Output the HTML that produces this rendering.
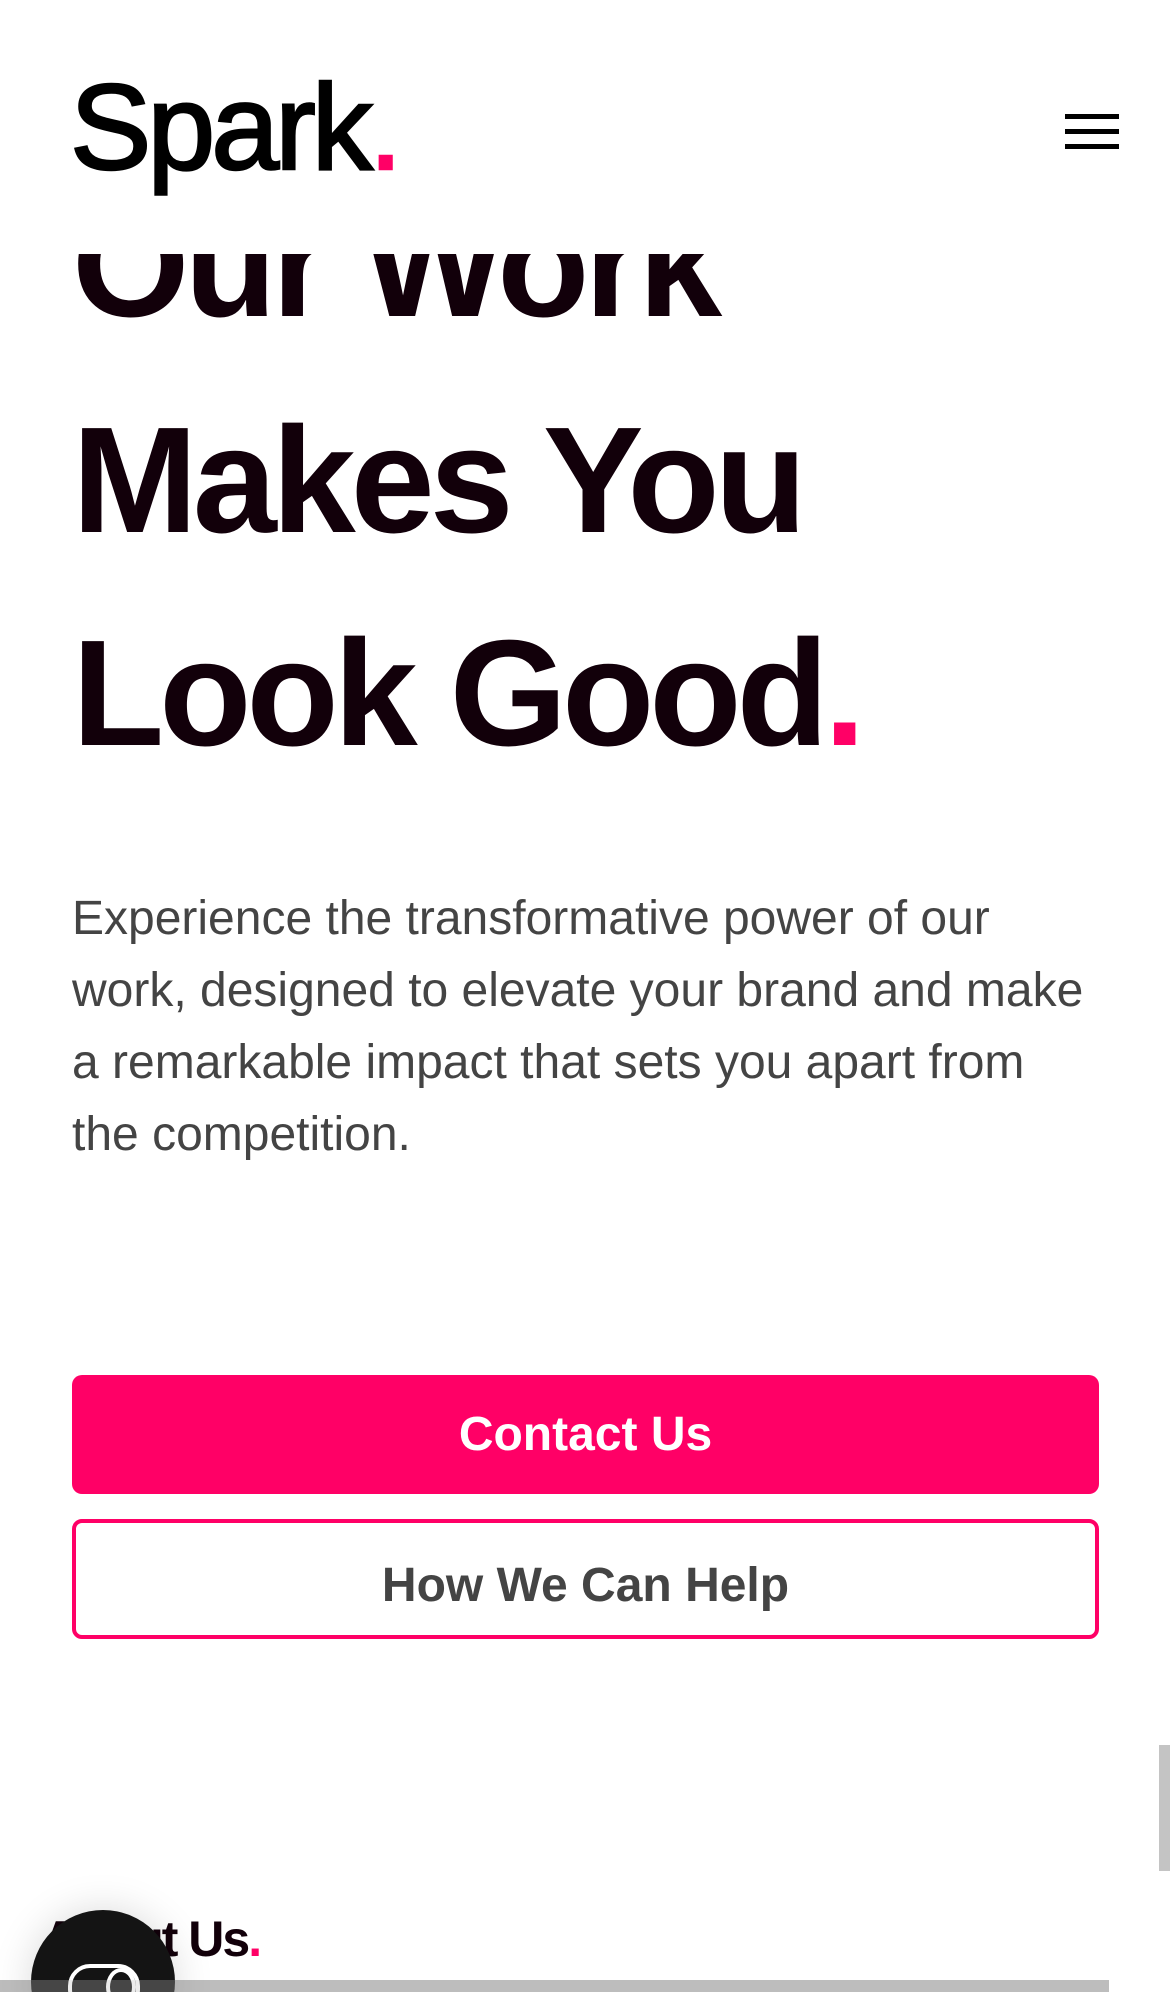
<!DOCTYPE html>
<html><head><meta charset="utf-8"><style>
html,body{margin:0;padding:0;background:#fff;width:1170px;height:1992px;overflow:hidden;position:relative;font-family:"Liberation Sans",Arial,sans-serif}
.abs{position:absolute}
.h{font-weight:700;font-size:151px;color:#12000a;letter-spacing:-5px;white-space:nowrap;line-height:1}
.pink{color:#ff0066}
</style></head><body>
<div class="abs h" style="left:72px;top:188px">Our Work</div>
<div class="abs" style="left:0;top:0;width:1170px;height:254px;background:#fff"></div>
<div class="abs" style="left:70px;top:66px;font-size:122px;font-weight:400;-webkit-text-stroke:2.5px #000;letter-spacing:-4px;color:#000;line-height:1;white-space:nowrap">Spark<span class="pink" style="-webkit-text-stroke:2.5px #ff0066">.</span></div>
<div class="abs" style="left:1065px;top:114px;width:54px;height:5px;background:#000"></div>
<div class="abs" style="left:1065px;top:129px;width:54px;height:5px;background:#000"></div>
<div class="abs" style="left:1065px;top:144px;width:54px;height:5px;background:#000"></div>
<div class="abs h" style="left:72px;top:404px">Makes You</div>
<div class="abs h" style="left:72px;top:617px">Look Good<span class="pink">.</span></div>
<div class="abs" style="left:72px;top:883px;width:1020px;font-size:48px;line-height:72px;color:#444">Experience the transformative power of our work, designed to elevate your brand and make a remarkable impact that sets you apart from the competition.</div>
<div class="abs" style="left:72px;top:1375px;width:1027px;height:119px;background:#ff0066;border-radius:10px;color:#fff;font-weight:700;font-size:48px;line-height:119px;text-align:center">Contact Us</div>
<div class="abs" style="left:72px;top:1519px;width:1019px;height:112px;border:4px solid #ff0066;border-radius:10px;color:#444;font-weight:700;font-size:48px;line-height:126px;text-align:center">How We Can Help</div>
<div class="abs" style="left:1159px;top:1745px;width:11px;height:126px;background:#c4c4c4"></div>
<div class="abs" style="left:42px;top:1914px;font-weight:700;font-size:50px;color:#12000a;line-height:1;letter-spacing:-2px">About Us<span class="pink">.</span></div>
<div class="abs" style="left:0;top:1980px;width:1109px;height:12px;background:#bdbdbd"></div>
<div class="abs" style="left:31px;top:1910px;width:144px;height:144px;border-radius:50%;background:#141414;box-shadow:0 0 40px rgba(0,0,0,.15)"></div>
<div class="abs" style="left:68px;top:1964px;width:64px;height:40px;border:4px solid #fff;border-radius:22px"></div>
<div class="abs" style="left:106px;top:1968px;width:22px;height:30px;border:4px solid #fff;border-radius:50%"></div>
<div class="abs" style="left:0;top:1980px;width:200px;height:12px;background:rgba(190,190,190,.3)"></div>
</body></html>
